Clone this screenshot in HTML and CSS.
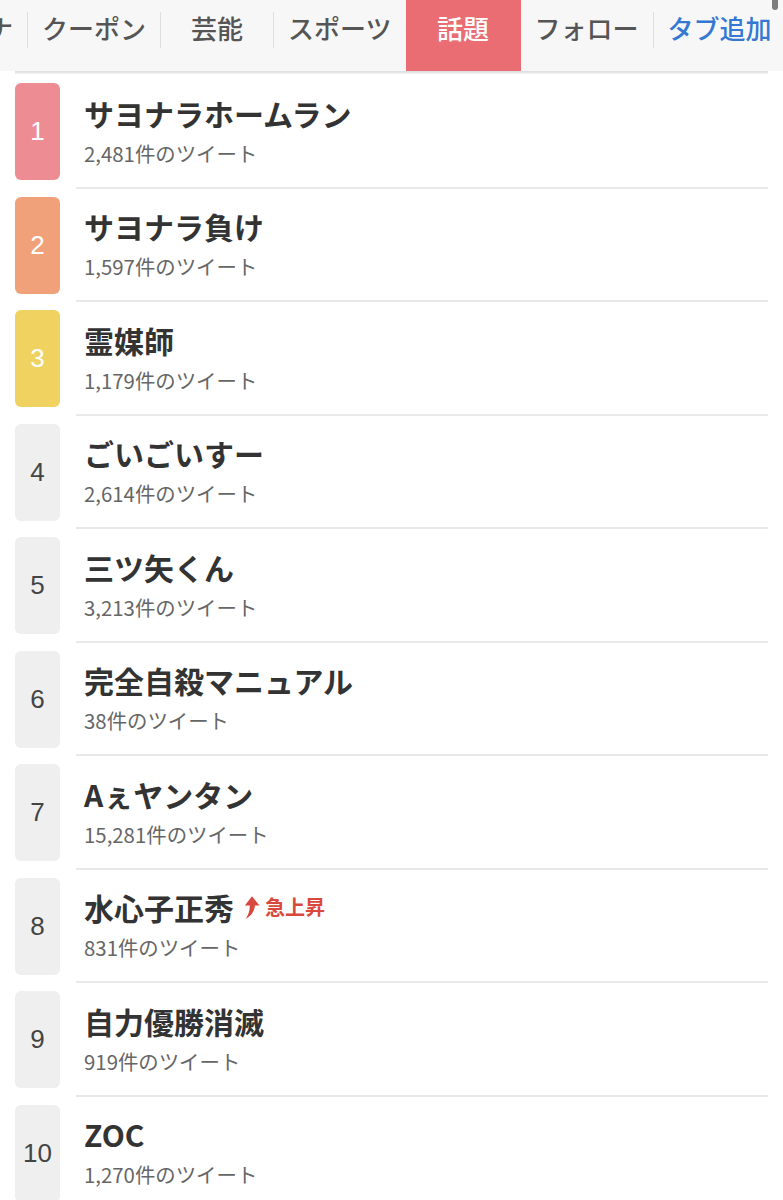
FILE: index.html
```html
<!DOCTYPE html>
<html lang="ja">
<head>
<meta charset="utf-8">
<title>話題</title>
<link rel="stylesheet" href="styles.css">
</head>
<body>
<div class="page">
  <nav class="tabbar">
    <a class="tab tab-cut">ナ</a>
    <span class="sep"></span>
    <a class="tab">クーポン</a>
    <span class="sep"></span>
    <a class="tab">芸能</a>
    <span class="sep"></span>
    <a class="tab">スポーツ</a>
    <a class="tab tab-active">話題</a>
    <a class="tab">フォロー</a>
    <span class="sep"></span>
    <a class="tab tab-add">タブ追加</a>
  </nav>
  <div class="scroll-thumb"></div>
  <div class="bar-shadow"></div>

  <ol class="ranking">
    <li class="row">
      <div class="rank-cell"><div class="rank rank-1">1</div></div>
      <div class="info"><div class="title">サヨナラホームラン</div><div class="count">2,481件のツイート</div></div>
    </li>
    <li class="row">
      <div class="rank-cell"><div class="rank rank-2">2</div></div>
      <div class="info"><div class="title">サヨナラ負け</div><div class="count">1,597件のツイート</div></div>
    </li>
    <li class="row">
      <div class="rank-cell"><div class="rank rank-3">3</div></div>
      <div class="info"><div class="title">霊媒師</div><div class="count">1,179件のツイート</div></div>
    </li>
    <li class="row">
      <div class="rank-cell"><div class="rank">4</div></div>
      <div class="info"><div class="title">ごいごいすー</div><div class="count">2,614件のツイート</div></div>
    </li>
    <li class="row">
      <div class="rank-cell"><div class="rank">5</div></div>
      <div class="info"><div class="title">三ツ矢くん</div><div class="count">3,213件のツイート</div></div>
    </li>
    <li class="row">
      <div class="rank-cell"><div class="rank">6</div></div>
      <div class="info"><div class="title">完全自殺マニュアル</div><div class="count">38件のツイート</div></div>
    </li>
    <li class="row">
      <div class="rank-cell"><div class="rank">7</div></div>
      <div class="info"><div class="title">Aぇヤンタン</div><div class="count">15,281件のツイート</div></div>
    </li>
    <li class="row">
      <div class="rank-cell"><div class="rank">8</div></div>
      <div class="info">
        <div class="title">水心子正秀<span class="surge"><svg class="surge-icon" viewBox="0 0 18 26" width="17" height="25"><path d="M9.5 1 L17.5 11 L12.6 11 C12.2 16.5 9.5 21.5 3 25 C6 20.5 7.3 15.5 7.2 11 L2 11 Z" fill="#d8483c"/></svg>急上昇</span></div>
        <div class="count">831件のツイート</div>
      </div>
    </li>
    <li class="row">
      <div class="rank-cell"><div class="rank">9</div></div>
      <div class="info"><div class="title">自力優勝消滅</div><div class="count">919件のツイート</div></div>
    </li>
    <li class="row">
      <div class="rank-cell"><div class="rank">10</div></div>
      <div class="info"><div class="title">ZOC</div><div class="count">1,270件のツイート</div></div>
    </li>
  </ol>
</div>
</body>
</html>
```
FILE: styles.css
```css
* { box-sizing: border-box; }
html, body { margin: 0; padding: 0; background: #fff; }
body {
  font-family: "Noto Sans CJK JP", "Noto Sans", sans-serif;
  color: #333;
}
.page { position: relative; width: 783px; overflow: hidden; }

.tabbar {
  display: flex;
  height: 71px;
  background: #f7f7f7;
  overflow: hidden;
  white-space: nowrap;
}
.tab {
  flex: none;
  display: flex;
  align-items: center;
  justify-content: center;
  min-width: 112px;
  padding: 0 14px 16px;
  font-size: 26px;
  line-height: 1;
  font-weight: 500;
  color: #555;
}
.tab-cut { min-width: 0; margin-left: -27px; }
.tab-active { background: #ea6d73; color: #fff; min-width: 115px; }
.tab-add { color: #3478d4; }
.sep {
  flex: none;
  width: 1px;
  height: 36px;
  margin-top: 12px;
  background: #dedede;
}
.scroll-thumb {
  position: absolute;
  top: -4px;
  right: 5px;
  width: 6px;
  height: 14px;
  border-radius: 3px;
  background: #7d7d7d;
}
.bar-shadow {
  margin: 0 15px;
  height: 3px;
  background: linear-gradient(#dcdcdc, #f2f2f2);
}

.ranking {
  list-style: none;
  margin: 0 15px;
  padding: 1px 0 0;
}
.row { display: flex; height: 113.5px; }
.rank-cell {
  flex: none;
  width: 61px;
  padding-top: 8px;
}
.rank {
  width: 45px;
  height: 97px;
  border-radius: 6px;
  background: #efefef;
  color: #444;
  font-family: "Liberation Sans", Arial, sans-serif;
  font-size: 26px;
  display: flex;
  align-items: center;
  justify-content: center;
}
.rank-1 { background: #ee8c94; color: #fff; }
.rank-2 { background: #f0a17a; color: #fff; }
.rank-3 { background: #f0d260; color: #fff; }

.info {
  flex: 1;
  display: flex;
  flex-direction: column;
  justify-content: center;
  padding-left: 8px;
  border-bottom: 2px solid #e9e9e9;
}
.title {
  display: flex;
  align-items: center;
  font-size: 30px;
  line-height: 36px;
  font-weight: 700;
  color: #333;
}
.count {
  margin-top: 8px;
  font-size: 20.4px;
  line-height: 28px;
  color: #666;
}
.surge {
  display: inline-flex;
  align-items: center;
  margin-left: 9px;
  font-size: 20px;
  font-weight: 700;
  color: #d8483c;
}
.surge-icon { margin-right: 5px; }
```
